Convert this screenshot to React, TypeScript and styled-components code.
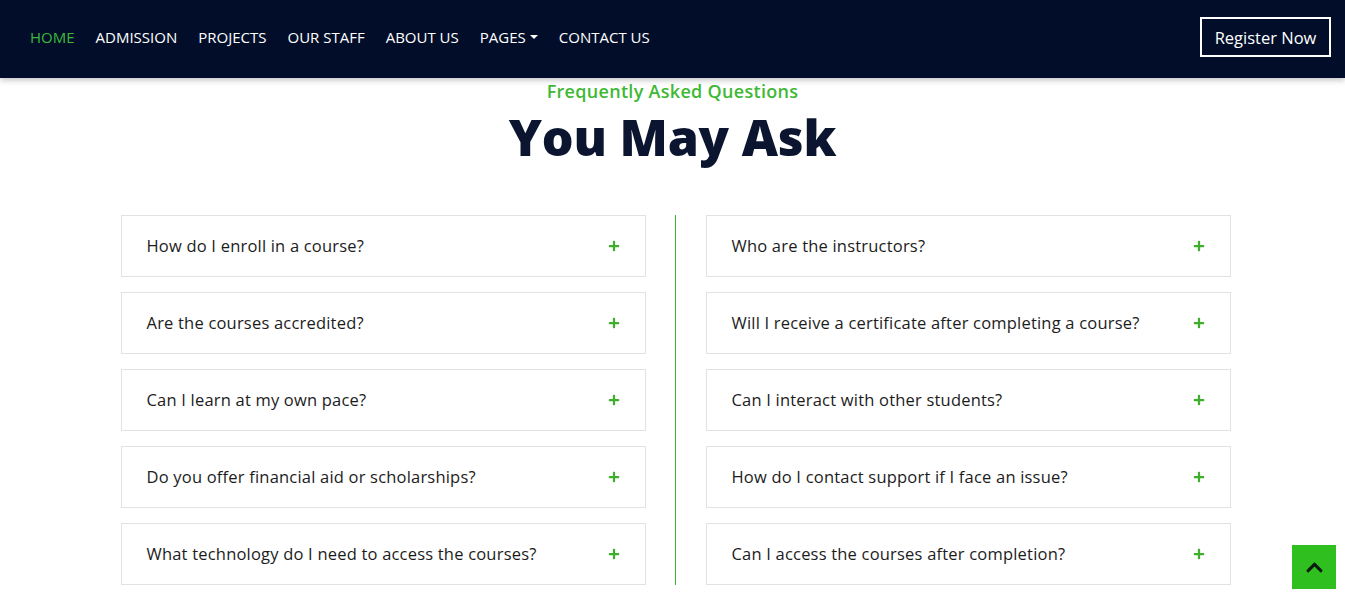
import React from "react";
import styled, { createGlobalStyle } from "styled-components";
import { FaPlus, FaChevronUp } from "react-icons/fa";

const GlobalStyle = createGlobalStyle`
  html, body {
    margin: 0;
    padding: 0;
    background: #ffffff;
    font-family: "Open Sans", "Liberation Sans", sans-serif;
    overflow: hidden;
  }
  * {
    box-sizing: border-box;
  }
`;

const leftQuestions = [
  "How do I enroll in a course?",
  "Are the courses accredited?",
  "Can I learn at my own pace?",
  "Do you offer financial aid or scholarships?",
  "What technology do I need to access the courses?",
];

const rightQuestions = [
  "Who are the instructors?",
  "Will I receive a certificate after completing a course?",
  "Can I interact with other students?",
  "How do I contact support if I face an issue?",
  "Can I access the courses after completion?",
];

const navLinks = ["HOME", "ADMISSION", "PROJECTS", "OUR STAFF", "ABOUT US", "PAGES", "CONTACT US"];

const App = () => {
  return (
    <Page>
      <GlobalStyle />
      <Header>
        <Nav>
          {navLinks.map((link, i) => (
            <NavLink key={link} active={i === 0}>
              {link}
              {link === "PAGES" && <Caret />}
            </NavLink>
          ))}
        </Nav>
        <RegisterButton>Register Now</RegisterButton>
      </Header>

      <Section>
        <SubTitle>Frequently Asked Questions</SubTitle>
        <Title>You May Ask</Title>

        <FaqGrid>
          <Column>
            {leftQuestions.map((q) => (
              <Item key={q}>
                <Question>{q}</Question>
                <PlusIcon />
              </Item>
            ))}
          </Column>
          <Divider />
          <Column>
            {rightQuestions.map((q) => (
              <Item key={q}>
                <Question>{q}</Question>
                <PlusIcon />
              </Item>
            ))}
          </Column>
        </FaqGrid>
      </Section>

      <BackToTop>
        <FaChevronUp />
      </BackToTop>
    </Page>
  );
};

export default App;

const Page = styled.div`
  width: 100%;
  height: 604px;
  position: relative;
`;

const Header = styled.header`
  height: 78px;
  background-color: #020e29;
  display: flex;
  align-items: center;
  justify-content: space-between;
  padding: 0 14px 3px 30px;
  box-shadow: rgba(0, 0, 0, 0.25) 0px 2px 6px;
  position: relative;
  z-index: 2;
`;

const Nav = styled.nav`
  display: flex;
  align-items: center;
  gap: 21px;
  padding-bottom: 1px;
`;

const NavLink = styled.a<{ active?: boolean }>`
  color: ${(p) => (p.active ? "#3cb83a" : "#ffffff")};
  font-size: 15px;
  font-weight: 500;
  display: flex;
  align-items: center;
  cursor: pointer;
`;

const Caret = styled.span`
  display: inline-block;
  margin-left: 4px;
  border-left: 4px solid transparent;
  border-right: 4px solid transparent;
  border-top: 4px solid #ffffff;
`;

const RegisterButton = styled.button`
  background: transparent;
  border: 2px solid #ffffff;
  color: #ffffff;
  font-family: inherit;
  font-size: 16.5px;
  font-weight: 500;
  width: 131px;
  height: 40px;
  padding: 0;
  margin-bottom: 1px;
  cursor: pointer;
`;

const Section = styled.section`
  display: flex;
  flex-direction: column;
  align-items: center;
`;

const SubTitle = styled.div`
  color: #3fb935;
  font-size: 18px;
  font-weight: 600;
  letter-spacing: 0.3px;
  margin-top: 1px;
  line-height: 24px;
`;

const Title = styled.h2`
  margin: 4px 0 0;
  color: #0b1530;
  font-size: 50px;
  font-weight: 800;
  letter-spacing: -0.2px;
  line-height: 60px;
`;

const FaqGrid = styled.div`
  display: grid;
  grid-template-columns: 525px 60px 525px;
  margin-top: 48px;
  margin-left: 6px;
`;

const Column = styled.div`
  display: flex;
  flex-direction: column;
  gap: 15px;
`;

const Divider = styled.div`
  width: 1px;
  background-color: #3fb535;
  margin-left: 29px;
`;

const Item = styled.div`
  height: 62px;
  border: 1px solid #e2e2e2;
  display: flex;
  align-items: center;
  justify-content: space-between;
  padding: 0 25px 2px 25px;
  background: #ffffff;
`;

const Question = styled.span`
  color: #1c1c1c;
  font-size: 16.5px;
  font-weight: 400;
  letter-spacing: 0.2px;
`;

const PlusIcon = styled(FaPlus)`
  color: #3eae2c;
  font-size: 12px;
  margin-top: 2px;
`;

const BackToTop = styled.div`
  position: absolute;
  right: 9px;
  bottom: 15px;
  width: 44px;
  height: 44px;
  background-color: #2fc01f;
  display: flex;
  align-items: center;
  justify-content: center;
  color: #0a1a10;
  font-size: 19px;
`;
